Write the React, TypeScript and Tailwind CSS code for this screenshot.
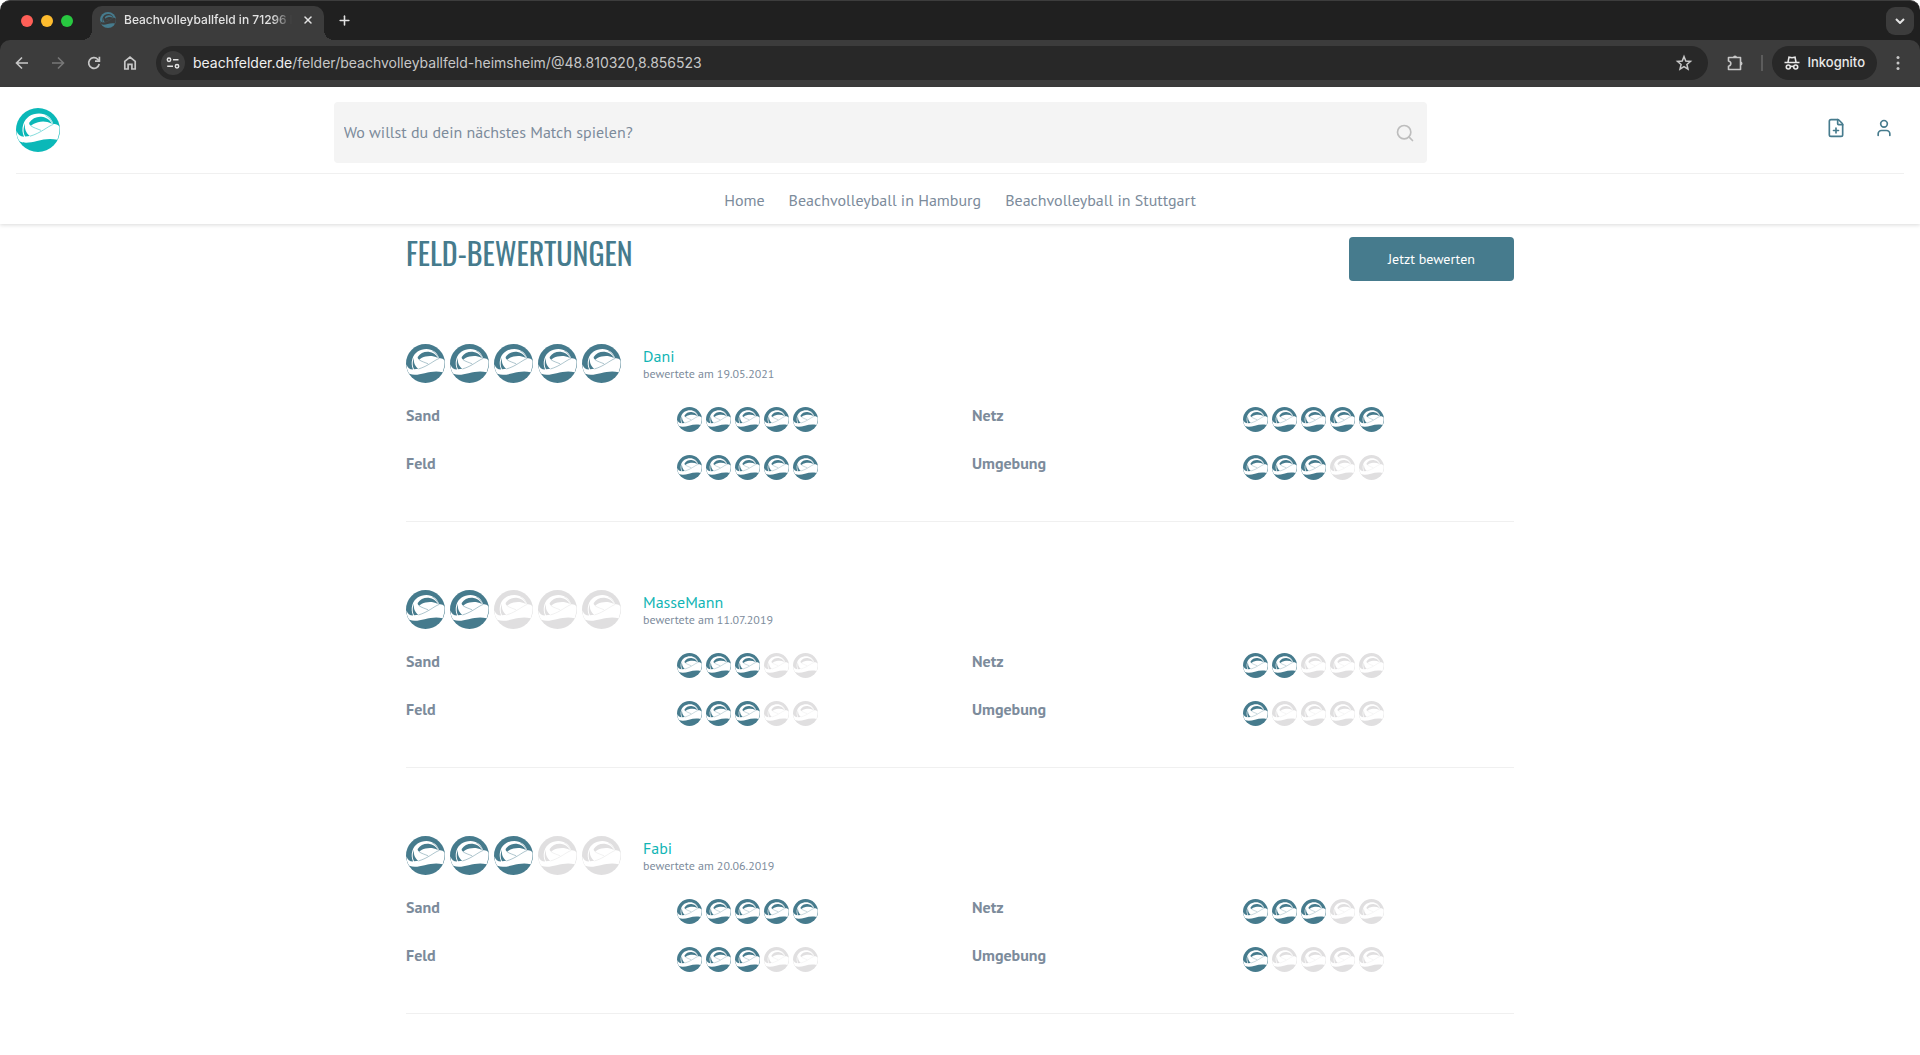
import { FilePlus, Plus, Search, User, X } from 'lucide-react';

type Review = {
  name: string;
  date: string;
  total: number;
  scores: { label: string; value: number }[];
};

const reviews: Review[] = [
  {
    name: 'Dani',
    date: '19.05.2021',
    total: 5,
    scores: [
      { label: 'Sand', value: 5 },
      { label: 'Netz', value: 5 },
      { label: 'Feld', value: 5 },
      { label: 'Umgebung', value: 3 },
    ],
  },
  {
    name: 'MasseMann',
    date: '11.07.2019',
    total: 2,
    scores: [
      { label: 'Sand', value: 3 },
      { label: 'Netz', value: 2 },
      { label: 'Feld', value: 3 },
      { label: 'Umgebung', value: 1 },
    ],
  },
  {
    name: 'Fabi',
    date: '20.06.2019',
    total: 3,
    scores: [
      { label: 'Sand', value: 5 },
      { label: 'Netz', value: 3 },
      { label: 'Feld', value: 3 },
      { label: 'Umgebung', value: 1 },
    ],
  },
];

/* Ball with a wave: coloured disc, light wave and swirl, thin seams. */
function Ball({ className, wave = '#fff' }: { className: string; wave?: string }) {
  return (
    <svg viewBox="0 0 44 44" className={className} aria-hidden="true">
      <circle cx="22" cy="22" r="22" fill="currentColor" />
      <path
        fill={wave}
        d="M.6 23C1.6 26.5 4 28.6 8 28.7C6.4 25 5.8 21 7.2 16.5C9.5 9.5 15.5 5.6 23 5.6C30 5.6 35.6 9.600 37.400 16.200C40 15.800 42 16.800 43.400 18.600C43.800 22 43.500 25.500 41.400 31.800C34 30.200 28 31.200 21 33C14.500 34.700 8.500 35.600 3.800 33.600C1.600 30.600.6 27 .6 23Z"
      />
      <path
        fill="currentColor"
        d="M13.2 14.8C16 10.4 20.5 8.4 25.5 8.8C30.5 9.2 34 12 35.8 15.8C31 13.2 26.5 13 22 14.2C19 15 16.6 16.2 14.8 17.8C13.600 17 13 16 13.200 14.800Z"
      />
      <path fill="currentColor" d="M9 15.5C6.8 20.5 7.4 25.5 9.2 28.6L13.8 28C10 25 8.2 20.5 9 15.500Z" />
      <g fill="none" stroke="currentColor" strokeWidth=".5">
        <path d="M37.2 16.4C31.5 18.5 25 25 14 28.2" />
        <path d="M14.8 17.8C17.5 19.8 21 20.6 25 22.4" />
        <path d="M29.5 7.6C33 9.4 35.4 12 36.6 16" />
      </g>
    </svg>
  );
}

function Rating({ value, large = false, label }: { value: number; large?: boolean; label: string }) {
  return (
    <div role="img" aria-label={`${label}: ${value} von 5`} className={large ? 'flex gap-[5px]' : 'flex gap-1'}>
      {[1, 2, 3, 4, 5].map((n) => (
        <span key={n} className={n <= value ? 'text-[#467b8d]' : 'text-[#e0dfe0]'}>
          <Ball className={large ? 'size-[39px]' : 'size-[25px]'} />
        </span>
      ))}
    </div>
  );
}

function BrowserChrome() {
  return (
    <div className="rounded-t-[10px] border-t border-[#3d3d3d] bg-[#202020] font-[Inter,sans-serif] text-[#e3e3e3]">
      <div className="flex h-[39px] items-end">
        <div className="flex w-[92px] gap-2 self-center pl-[21px]">
          <span className="size-3 rounded-full bg-[#ff5f57]" />
          <span className="size-3 rounded-full bg-[#febc2e]" />
          <span className="size-3 rounded-full bg-[#28c840]" />
        </div>
        <div className="relative flex h-[34px] w-[232px] items-center rounded-t-[10px] bg-[#3c3c3c] px-2 pb-1.5">
          <span className="absolute bottom-0 -left-2.5 size-2.5 bg-[radial-gradient(circle_at_0_0,#202020_10px,#3c3c3c_10px)]" />
          <span className="absolute -right-2.5 bottom-0 size-2.5 bg-[radial-gradient(circle_at_100%_0,#202020_10px,#3c3c3c_10px)]" />
          <span className="text-[#467b8d]">
            <Ball className="size-4" wave="#3c3c3c" />
          </span>
          <span className="ml-2 w-[168px] whitespace-nowrap text-xs font-medium [mask-image:linear-gradient(to_right,black_148px,transparent_168px)]">
            Beachvolleyballfeld in 71296 H
          </span>
          <button type="button" aria-label="Tab schließen" className="ml-auto grid size-4 place-items-center">
            <X size={12} strokeWidth={3} />
          </button>
        </div>
        <button type="button" aria-label="Neuer Tab" className="ml-3 grid size-4 place-items-center self-center">
          <Plus size={15} strokeWidth={2.5} />
        </button>
        <button
          type="button"
          aria-label="Tabs durchsuchen"
          className="mr-1.5 ml-auto grid size-7 place-items-center self-center rounded-[9px] bg-[#3c3c3c]"
        >
          <svg viewBox="0 0 10 6" className="w-2.5" fill="none" stroke="currentColor" strokeWidth="2">
            <path d="M1 1L5 5L9 1" />
          </svg>
        </button>
      </div>

      <div className="flex h-[47px] items-center rounded-t-[10px] bg-[#3c3c3c] pb-px pl-3 text-[#c7c7c7]">
        <div className="flex gap-4">
          <button type="button" aria-label="Zurück">
            <svg viewBox="0 0 20 20" className="size-5" fill="none" stroke="currentColor" strokeWidth="1.6">
              <path d="M16 10H5M10 4.5L4.5 10L10 15.5" />
            </svg>
          </button>
          <button type="button" aria-label="Vorwärts" className="text-[#777777]">
            <svg viewBox="0 0 20 20" className="size-5" fill="none" stroke="currentColor" strokeWidth="1.6">
              <path d="M4 10H15M10 4.5L15.5 10L10 15.5" />
            </svg>
          </button>
          <button type="button" aria-label="Neu laden">
            <svg viewBox="0 0 20 20" className="size-5" fill="none" stroke="currentColor" strokeWidth="1.7">
              <path d="M15.2 11A5.3 5.3 0 1 1 13.8 6.3L15.3 8" />
              <path d="M15.4 3.8V8.2H11" />
            </svg>
          </button>
          <button type="button" aria-label="Startseite">
            <svg viewBox="0 0 20 20" className="size-5" fill="none" stroke="currentColor" strokeWidth="1.7">
              <path d="M4.8 16V8.3L10 4.2L15.2 8.3V16H11.9V11.3H8.1V16Z" />
            </svg>
          </button>
        </div>

        <div className="ml-4 flex h-[34px] flex-1 items-center rounded-full bg-[#282828] pr-3.5 pl-[5px] text-sm">
          <button
            type="button"
            aria-label="Website-Informationen"
            className="grid size-6 place-items-center rounded-full bg-[#3c3c3c] text-[#e3e3e3]"
          >
            <svg viewBox="0 0 14 12" className="h-3 w-3.5" fill="none" stroke="currentColor" strokeWidth="1.5">
              <circle cx="3" cy="2.8" r="1.7" />
              <path d="M7 2.8H12.5M1.2 9.2H7" />
              <circle cx="11" cy="9.2" r="1.7" />
            </svg>
          </button>
          <label htmlFor="url" className="ml-2 text-[#f0f0f0]">
            beachfelder.de
          </label>
          <input
            id="url"
            className="min-w-0 flex-1 bg-transparent text-[#c7c7c7] outline-none"
            defaultValue="/felder/beachvolleyballfeld-heimsheim/@48.810320,8.856523"
          />
          <button type="button" aria-label="Lesezeichen">
            <svg viewBox="0 0 20 20" className="size-5" fill="none" stroke="currentColor" strokeWidth="1.5">
              <path d="M10 3.6L11.8 8L16.5 8.4L12.9 11.5L14 16.1L10 13.6L6 16.1L7.1 11.5L3.5 8.4L8.2 8Z" />
            </svg>
          </button>
        </div>

        <button type="button" aria-label="Erweiterungen" className="ml-[17px]">
          <svg
            viewBox="0 0 20 20"
            className="size-5"
            fill="none"
            stroke="currentColor"
            strokeWidth="1.6"
            strokeLinejoin="round"
          >
            <path d="M3.5 4.5H15.5V16.5H3.5V13.2C6.6 12.6 6.6 8.6 3.5 8Z" />
            <path fill="currentColor" stroke="none" d="M8 4.5A2 2 0 0 1 12 4.5ZM15.5 8.5A2 2 0 0 1 15.5 12.5Z" />
          </svg>
        </button>
        <span className="mr-[9px] ml-4 h-4 w-0.5 bg-[#5c5c5c]" />
        <button
          type="button"
          className="flex h-[34px] items-center gap-2 rounded-full bg-[#282828] px-3 text-[13px] font-medium text-[#e8e8e8]"
        >
          <svg viewBox="0 0 16 16" className="size-4" fill="none" stroke="currentColor" strokeWidth="1.6">
            <path d="M.5 7.5H15.5M4 7.2L5 2.2L8 2.8L11 2.2L12 7.2" />
            <circle cx="4.3" cy="12" r="2" />
            <circle cx="11.7" cy="12" r="2" />
            <path d="M6.3 11.7Q8 10.8 9.7 11.7" />
          </svg>
          Inkognito
        </button>
        <button type="button" aria-label="Menü" className="mr-3 ml-[11px] grid size-5 place-items-center">
          <svg viewBox="0 0 4 16" className="h-4 w-1" fill="currentColor">
            <circle cx="2" cy="2.5" r="1.5" />
            <circle cx="2" cy="8" r="1.5" />
            <circle cx="2" cy="13.5" r="1.5" />
          </svg>
        </button>
      </div>
    </div>
  );
}

function SiteHeader() {
  return (
    <header className="px-4 shadow-[0_1px_4px_rgba(0,0,0,0.15)]">
      <div className="grid grid-cols-[2fr_7fr_3fr] border-b border-[#f0f0f0] pt-[15px] pb-2.5">
        <a href="#start" aria-label="beachfelder.de" className="mt-1.5 justify-self-start text-[#0bb8b8]">
          <Ball className="size-11" />
        </a>
        <form role="search" className="mr-[5px] ml-[3px] flex h-[61px] items-center rounded bg-[#f4f4f4] pr-3 pl-2.5">
          <input
            type="search"
            aria-label="Wo willst du dein nächstes Match spielen?"
            placeholder="Wo willst du dein nächstes Match spielen?"
            className="min-w-0 flex-1 bg-transparent pb-0.5 outline-none placeholder:text-[#7c8b9b]"
          />
          <button type="submit" aria-label="Suchen" className="text-[#bdbdbd]">
            <Search size={20} strokeWidth={2} />
          </button>
        </form>
        <div className="flex items-start justify-end gap-7 pt-4 pr-2.5 text-[#467b8d]">
          <a href="#neu" aria-label="Feld eintragen">
            <FilePlus size={20} />
          </a>
          <a href="#profil" aria-label="Profil">
            <User size={20} />
          </a>
        </div>
      </div>
      <nav className="flex h-[50px] items-center justify-center gap-6 pt-0.5">
        <a href="#home">Home</a>
        <a href="#hamburg">Beachvolleyball in Hamburg</a>
        <a href="#stuttgart">Beachvolleyball in Stuttgart</a>
      </nav>
    </header>
  );
}

function ReviewItem({ review }: { review: Review }) {
  return (
    <article className="border-b border-[#f0f0f0] pb-[41px]">
      <div className="flex items-start gap-[22px]">
        <Rating value={review.total} large label="Gesamt" />
        <div className="pt-0.5">
          <h3 className="leading-5 text-[#11b5b5]">{review.name}</h3>
          <p className="text-xs leading-4">bewertete am {review.date}</p>
        </div>
      </div>
      <dl className="mt-6 grid grid-cols-2 gap-x-6 gap-y-[23px]">
        {review.scores.map((score) => (
          <div key={score.label} className="grid h-[25px] grid-cols-2">
            <dt className="leading-4 font-bold">{score.label}</dt>
            <dd>
              <Rating value={score.value} label={score.label} />
            </dd>
          </div>
        ))}
      </dl>
    </article>
  );
}

export default function App() {
  return (
    <div className="h-screen overflow-hidden bg-white font-['PT_Sans',sans-serif] text-base text-[#7c8b9b]">
      <BrowserChrome />
      <SiteHeader />
      <main className="mx-auto max-w-[1108px] pt-[13px]">
        <div className="flex items-start justify-between">
          <h2 className="font-[Oswald,sans-serif] text-[30px] leading-8 font-normal text-[#467b8d] uppercase">
            Feld-Bewertungen
          </h2>
          <button type="button" className="h-11 w-[165px] rounded bg-[#467b8d] text-sm text-white">
            Jetzt bewerten
          </button>
        </div>
        <div className="mt-[63px] flex flex-col gap-[68px]">
          {reviews.map((review) => (
            <ReviewItem key={review.name} review={review} />
          ))}
        </div>
      </main>
    </div>
  );
}
